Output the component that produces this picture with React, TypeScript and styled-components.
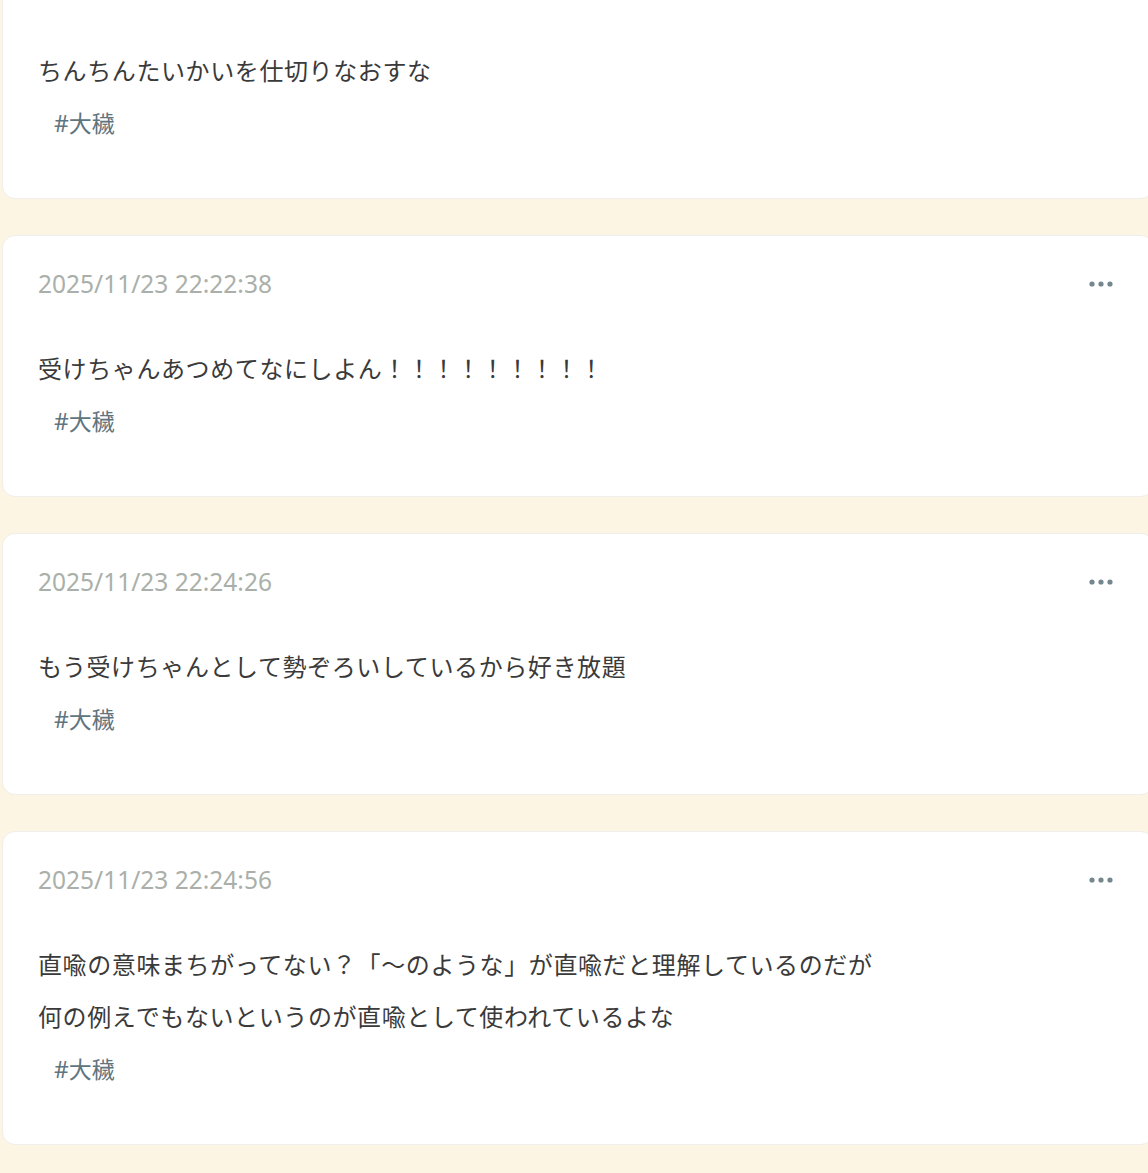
import React from "react";
import styled, { createGlobalStyle } from "styled-components";

const GlobalStyle = createGlobalStyle`
  html, body {
    margin: 0;
    padding: 0;
    overflow: hidden;
    background-color: #fcf5e3;
  }
  body {
    font-family: "Noto Sans", "Noto Sans CJK JP", sans-serif;
    color: #3a3a3a;
  }
`;

const Feed = styled.main`
  display: flex;
  flex-direction: column;
  gap: 36px;
  /* the list is scrolled a little, first card top is above the window */
  margin-top: -63px;
  padding-left: 2px;
  padding-bottom: 40px;
`;

const Card = styled.article`
  width: 1152px;
  box-sizing: border-box;
  background-color: #ffffff;
  border: 1px solid #efeeeb;
  border-radius: 13px;
  padding: 31px 38px 58px 35px;
  display: flex;
  flex-direction: column;
`;

const CardHeader = styled.div`
  display: flex;
  justify-content: space-between;
  align-items: center;
  height: 34px;
`;

const PostDate = styled.span`
  font-family: "Noto Sans", "Open Sans", sans-serif;
  font-size: 24.5px;
  color: #aab0a9;
  line-height: 34px;
`;

const MoreButton = styled.button`
  border: none;
  background: none;
  padding: 0;
  display: flex;
  align-items: center;
  cursor: pointer;
`;

const Body = styled.p`
  margin: 41px 0 0;
  font-family: "Noto Sans CJK JP", sans-serif;
  font-size: 24px;
  letter-spacing: 0.6px;
  line-height: 52px;
  color: #3a3a3a;
`;

const TagList = styled.div`
  display: flex;
  gap: 12px;
  margin-top: 10px;
`;

const Tag = styled.span`
  padding: 0 16px;
  font-family: "Noto Sans", "Noto Sans CJK JP", sans-serif;
  font-size: 23px;
  line-height: 34px;
  color: #5f7580;
`;

const Dots = () => (
  <svg width="26" height="6" viewBox="0 0 26 6">
    <circle cx="3" cy="3" r="2.6" fill="#74868e" />
    <circle cx="12" cy="3" r="2.6" fill="#74868e" />
    <circle cx="21" cy="3" r="2.6" fill="#74868e" />
  </svg>
);

type Post = {
  id: number;
  date: string;
  lines: string[];
  tags: string[];
};

const posts: Post[] = [
  {
    id: 1,
    date: "2025/11/23 22:21:04",
    lines: ["ちんちんたいかいを仕切りなおすな"],
    tags: ["大穢"],
  },
  {
    id: 2,
    date: "2025/11/23 22:22:38",
    lines: ["受けちゃんあつめてなにしよん！！！！！！！！！"],
    tags: ["大穢"],
  },
  {
    id: 3,
    date: "2025/11/23 22:24:26",
    lines: ["もう受けちゃんとして勢ぞろいしているから好き放題"],
    tags: ["大穢"],
  },
  {
    id: 4,
    date: "2025/11/23 22:24:56",
    lines: [
      "直喩の意味まちがってない？「〜のような」が直喩だと理解しているのだが",
      "何の例えでもないというのが直喩として使われているよな",
    ],
    tags: ["大穢"],
  },
];

const PostCard = ({ post }: { post: Post }) => {
  return (
    <Card>
      <CardHeader>
        <PostDate>{post.date}</PostDate>
        <MoreButton aria-label="more">
          <Dots />
        </MoreButton>
      </CardHeader>
      <Body>
        {post.lines.map((line, i) => (
          <React.Fragment key={i}>
            {i > 0 && <br />}
            {line}
          </React.Fragment>
        ))}
      </Body>
      <TagList>
        {post.tags.map((tag) => (
          <Tag key={tag}>#{tag}</Tag>
        ))}
      </TagList>
    </Card>
  );
};

const App = () => {
  return (
    <>
      <GlobalStyle />
      <Feed>
        {posts.map((post) => (
          <PostCard key={post.id} post={post} />
        ))}
      </Feed>
    </>
  );
};

export default App;
